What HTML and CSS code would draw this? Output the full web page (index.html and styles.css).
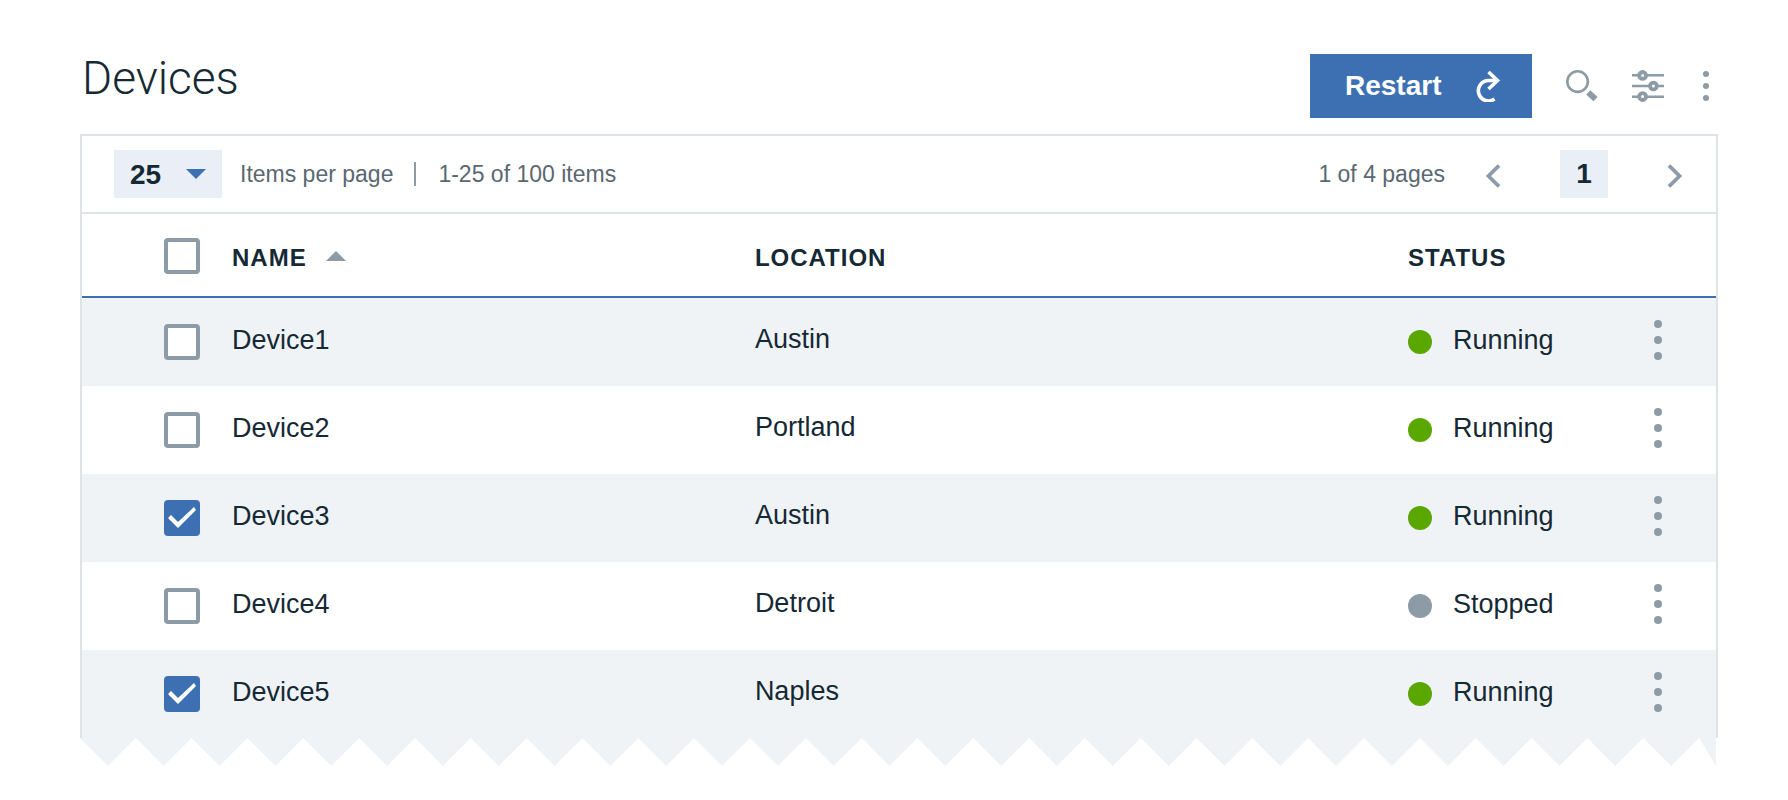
FILE: index.html
```html
<!DOCTYPE html>
<html lang="en">
<head>
<meta charset="utf-8">
<meta name="viewport" content="width=device-width, initial-scale=1">
<title>Devices</title>
<link rel="stylesheet" href="styles.css">
</head>
<body>
<svg class="sprite" aria-hidden="true">
  <symbol id="kebab" viewBox="0 0 8 40">
    <circle cx="4" cy="4" r="4"/><circle cx="4" cy="20" r="4"/><circle cx="4" cy="36" r="4"/>
  </symbol>
</svg>
<main class="page">
  <header class="page-header">
    <h1 class="title">Devices</h1>
    <div class="actions">
      <button class="restart" type="button">
        Restart
        <svg width="26" height="32" viewBox="0 0 26 32" fill="none" stroke="currentColor" stroke-width="3.6" aria-hidden="true">
          <path d="M22 10.500H13.500A10.200 10.200 0 1 0 19.500 29"/>
          <path d="M13.500 2 22.500 10.500 13.500 19"/>
        </svg>
      </button>
      <button class="icon-button" type="button" aria-label="Search">
        <svg width="32" height="32" viewBox="0 0 32 32" fill="none" stroke="currentColor" aria-hidden="true">
          <circle cx="11.600" cy="11.600" r="10.300" stroke-width="2.600"/>
          <path d="M22.300 22.300 29.500 29.200" stroke-width="6"/>
        </svg>
      </button>
      <button class="icon-button" type="button" aria-label="Filter">
        <svg width="32" height="32" viewBox="0 0 32 32" fill="none" stroke="currentColor" aria-hidden="true">
          <path d="M0 5.300H6M15 5.300H32M0 16H17M26 16H32M0 26.700H6M15 26.700H32" stroke-width="2.600"/>
          <g stroke-width="3.800"><circle cx="10.600" cy="5.400" r="3.400"/><circle cx="21.400" cy="16" r="3.400"/><circle cx="10.600" cy="26.600" r="3.400"/></g>
        </svg>
      </button>
      <button class="icon-button narrow" type="button" aria-label="More options">
        <svg width="6" height="30" fill="currentColor" aria-hidden="true"><use href="#kebab"/></svg>
      </button>
    </div>
  </header>

  <section class="frame">
    <div class="pagination">
      <div class="select">
        <select id="page-size"><option selected>25</option><option>50</option><option>100</option></select>
        <svg class="caret" width="20" height="10" viewBox="0 0 20 10" fill="currentColor" aria-hidden="true"><path d="M0 0H20L10 10Z"/></svg>
      </div>
      <label for="page-size">Items per page</label>
      <span class="divider"></span>
      <span>1-25 of 100 items</span>
      <div class="pager">
        <label for="page-number">1 of 4 pages</label>
        <div class="pager-controls">
          <button class="chevron" type="button" aria-label="Previous page">
            <svg width="16" height="24" viewBox="0 0 16 24" fill="none" stroke="currentColor" stroke-width="3.800" aria-hidden="true"><path d="M14 1.500 3.500 12 14 22.500"/></svg>
          </button>
          <input class="page-number" id="page-number" type="text" value="1">
          <button class="chevron" type="button" aria-label="Next page">
            <svg width="16" height="24" viewBox="0 0 16 24" fill="none" stroke="currentColor" stroke-width="3.800" aria-hidden="true"><path d="M2 1.500 12.500 12 2 22.500"/></svg>
          </button>
        </div>
      </div>
    </div>

    <table class="devices">
      <colgroup><col class="col-check"><col class="col-name"><col><col class="col-status"><col class="col-menu"></colgroup>
      <thead>
        <tr>
          <th class="check"><input type="checkbox" aria-label="Select all devices"></th>
          <th scope="col" aria-sort="ascending"><button class="sort" type="button">NAME <svg width="20" height="10" viewBox="0 0 20 10" fill="currentColor" aria-hidden="true"><path d="M0 10H20L10 0Z"/></svg></button></th>
          <th scope="col">LOCATION</th>
          <th scope="col">STATUS</th>
          <td></td>
        </tr>
      </thead>
      <tbody>
        <tr>
          <td class="check"><input type="checkbox" id="d1"></td>
          <td><label for="d1">Device1</label></td>
          <td class="location">Austin</td>
          <td><div class="status running"><span>Running</span></div></td>
          <td class="menu"><button type="button" aria-label="Device1 options"><svg width="8" height="40" fill="currentColor"><use href="#kebab"/></svg></button></td>
        </tr>
        <tr>
          <td class="check"><input type="checkbox" id="d2"></td>
          <td><label for="d2">Device2</label></td>
          <td class="location">Portland</td>
          <td><div class="status running"><span>Running</span></div></td>
          <td class="menu"><button type="button" aria-label="Device2 options"><svg width="8" height="40" fill="currentColor"><use href="#kebab"/></svg></button></td>
        </tr>
        <tr>
          <td class="check"><input type="checkbox" id="d3" checked></td>
          <td><label for="d3">Device3</label></td>
          <td class="location">Austin</td>
          <td><div class="status running"><span>Running</span></div></td>
          <td class="menu"><button type="button" aria-label="Device3 options"><svg width="8" height="40" fill="currentColor"><use href="#kebab"/></svg></button></td>
        </tr>
        <tr>
          <td class="check"><input type="checkbox" id="d4"></td>
          <td><label for="d4">Device4</label></td>
          <td class="location">Detroit</td>
          <td><div class="status"><span>Stopped</span></div></td>
          <td class="menu"><button type="button" aria-label="Device4 options"><svg width="8" height="40" fill="currentColor"><use href="#kebab"/></svg></button></td>
        </tr>
        <tr>
          <td class="check"><input type="checkbox" id="d5" checked></td>
          <td><label for="d5">Device5</label></td>
          <td class="location">Naples</td>
          <td><div class="status running"><span>Running</span></div></td>
          <td class="menu"><button type="button" aria-label="Device5 options"><svg width="8" height="40" fill="currentColor"><use href="#kebab"/></svg></button></td>
        </tr>
      </tbody>
    </table>
  </section>
  <svg class="torn-edge" viewBox="0 0 1643 28" preserveAspectRatio="none" aria-hidden="true">
    <path d="M0 0
      l28 28 28-28 28 28 28-28 28 28 28-28 28 28 28-28 28 28 28-28
      l28 28 28-28 28 28 28-28 28 28 28-28 28 28 28-28 28 28 28-28
      l28 28 28-28 28 28 28-28 28 28 28-28 28 28 28-28 28 28 28-28
      l28 28 28-28 28 28 28-28 28 28 28-28 28 28 28-28 28 28 28-28
      l28 28 28-28 28 28 28-28 28 28 28-28 28 28 28-28 28 28 28-28
      l28 28 28-28 28 28 28-28 28 28 28-28 28 28 28-28
      l17 28V0Z"/>
  </svg>
</main>
</body>
</html>
```

FILE: styles.css
```css
:root {
  --blue: #3d70b2;
  --ink: #152935;
  --muted: #5a6872;
  --icon: #8c9ba5;
  --line: #dfe3e6;
  --stripe: #eff3f6;
  --field: #eaeff7;
}

* { box-sizing: border-box; }

body {
  margin: 0;
  background: #fff;
  color: var(--ink);
  font-family: "Liberation Sans", Arial, sans-serif;
  font-size: 27px;
}

button, select, input { font: inherit; }

button {
  display: flex;
  align-items: center;
  justify-content: center;
  padding: 0;
  border: 0;
  background: none;
  color: var(--icon);
  cursor: pointer;
}

.sprite { position: absolute; width: 0; height: 0; }

.page { padding: 54px 70px 32px 80px; }

/* Page header */
.page-header {
  display: flex;
  align-items: flex-start;
  justify-content: space-between;
  margin-bottom: 16px;
}

.title {
  margin: 0;
  padding-left: 2px;
  font-family: Roboto, "Liberation Sans", sans-serif;
  font-size: 46px;
  font-weight: 300;
  line-height: 48px;
}

.actions { display: flex; align-items: center; gap: 26px; }

.restart {
  width: 222px;
  height: 64px;
  margin-right: 4px;
  padding: 0 31px 0 35px;
  justify-content: space-between;
  background: var(--blue);
  color: #fff;
  font-size: 28px;
  font-weight: 700;
}

.icon-button { width: 40px; height: 40px; }
.icon-button.narrow { width: 24px; }

/* Bordered panel */
.frame { border: 2px solid var(--line); border-bottom: 0; }

.pagination {
  display: flex;
  align-items: center;
  height: 78px;
  padding: 0 25px 0 32px;
  border-bottom: 2px solid var(--line);
  color: var(--muted);
  font-size: 23px;
}

.select { display: grid; align-items: center; margin-right: 18px; color: var(--blue); }
.select select, .select .caret { grid-area: 1 / 1; }

.select select {
  width: 108px;
  height: 48px;
  padding: 0 16px;
  appearance: none;
  border: 0;
  border-radius: 0;
  background: var(--field);
  color: var(--ink);
  font-size: 28px;
  font-weight: 700;
}

.select .caret { justify-self: end; margin-right: 16px; pointer-events: none; }

.divider { width: 2px; height: 24px; margin: 0 22px 0 21px; background: var(--icon); }

.pager { display: flex; align-items: center; gap: 32px; margin-left: auto; }
.pager-controls { display: flex; align-items: center; gap: 51px; }
.chevron { width: 32px; height: 48px; padding-top: 4px; }

.page-number {
  width: 48px;
  height: 48px;
  padding: 0;
  border: 0;
  background: var(--field);
  color: var(--ink);
  font-size: 28px;
  font-weight: 700;
  text-align: center;
}

/* Device table */
.devices { width: 100%; table-layout: fixed; border-collapse: separate; border-spacing: 0; }
.col-check { width: 150px; }
.col-name { width: 32%; }
.col-status { width: 192px; }
.col-menu { width: 116px; }

.devices th, .devices td { padding: 0; text-align: left; vertical-align: middle; }

.devices thead th, .devices thead td {
  height: 84px;
  padding-top: 5px;
  border-bottom: 2px solid var(--blue);
  font-size: 24px;
  font-weight: 700;
  letter-spacing: 1px;
}

.devices tbody td { height: 88px; }
.devices tbody tr:nth-child(odd) { background: var(--stripe); }
.devices .check { padding-left: 82px; }
.devices thead .check { padding-top: 2px; }
.devices tbody label, .status span { display: block; padding-bottom: 3px; }
.devices .location { padding-bottom: 6px; }

.sort { gap: 19px; color: var(--ink); letter-spacing: inherit; }
.sort svg { margin-bottom: 4px; color: var(--icon); }

.check input {
  display: grid;
  width: 36px;
  height: 36px;
  margin: 0;
  appearance: none;
  border: 4px solid var(--icon);
  border-radius: 4px;
  background: #fff;
}

.check input:checked { border: 0; background: var(--blue); }

.check input:checked::before {
  content: "";
  background: #fff;
  clip-path: polygon(4px 18px, 7px 15px, 14px 22px, 30px 7px, 32px 10px, 14px 28px);
}

.status { display: flex; align-items: center; gap: 21px; }

.status::before {
  content: "";
  width: 24px;
  height: 24px;
  border-radius: 50%;
  background: var(--icon);
}

.status.running::before { background: #5aa700; }

.devices .menu { padding-bottom: 4px; }
.menu button { width: 32px; height: 48px; margin: 0 auto; }

.torn-edge { display: block; width: 100%; height: 28px; fill: var(--stripe); }
```
